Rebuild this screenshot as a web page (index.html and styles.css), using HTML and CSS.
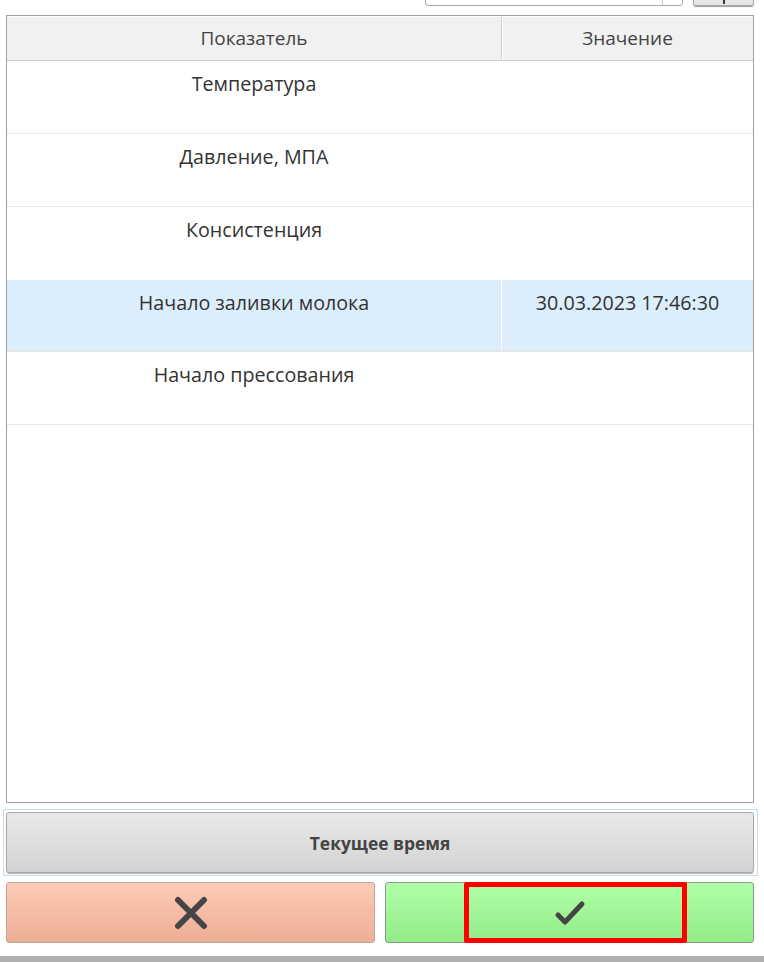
FILE: index.html
```html
<!DOCTYPE html>
<html lang="ru">
<head>
<meta charset="utf-8">
<link rel="stylesheet" href="styles.css">
</head>
<body>
<div class="page">
  <div class="toolbar">
    <div class="combo"><span class="combo-field"></span><span class="combo-arrow"></span></div>
    <div class="tool-btn"><span class="tool-glyph"></span></div>
  </div>
  <div class="grid">
    <div class="grid-head">
      <div class="cell c1">Показатель</div>
      <div class="cell c2">Значение</div>
    </div>
    <div class="grid-row"><div class="cell c1">Температура</div><div class="cell c2"></div></div>
    <div class="grid-row"><div class="cell c1">Давление, МПА</div><div class="cell c2"></div></div>
    <div class="grid-row"><div class="cell c1">Консистенция</div><div class="cell c2"></div></div>
    <div class="grid-row selected"><div class="cell c1">Начало заливки молока</div><div class="cell c2">30.03.2023 17:46:30</div></div>
    <div class="grid-row"><div class="cell c1">Начало прессования</div><div class="cell c2"></div></div>
  </div>
  <div class="now-wrap">
    <div class="now-btn">Текущее время</div>
  </div>
  <div class="actions">
    <div class="act cancel">
      <svg width="34" height="34" viewBox="0 0 34 34"><path d="M4 4 L30 30 M30 4 L4 30" stroke="#454545" stroke-width="6" stroke-linecap="round" fill="none"/></svg>
    </div>
    <div class="act ok">
      <span class="highlight"></span>
      <svg width="34" height="26" viewBox="0 0 34 26"><path d="M5 15 L12 22 L29 4" stroke="#454545" stroke-width="5" stroke-linecap="round" stroke-linejoin="round" fill="none"/></svg>
    </div>
  </div>
  <div class="bottom-bar"></div>
</div>
</body>
</html>
```

FILE: styles.css
```css
html, body {
  margin: 0;
  padding: 0;
  background: #ffffff;
}
body {
  font-family: "Open Sans", "Noto Sans", sans-serif;
  color: #333333;
  overflow: hidden;
}
.page {
  width: 764px;
  height: 962px;
  display: flex;
  flex-direction: column;
}
.toolbar {
  height: 15px;
  display: flex;
  justify-content: flex-end;
  align-items: flex-end;
  padding-right: 10px;
  gap: 10px;
  overflow: hidden;
}
.toolbar > * {
  margin-bottom: 9px;
}
.combo {
  width: 258px;
  height: 30px;
  border: 1px solid #a8a8a8;
  border-radius: 3px;
  display: flex;
  box-sizing: border-box;
  background: #fff;
}
.combo-field {
  flex: 1;
  border-right: 1px solid #c8c8c8;
}
.combo-arrow {
  width: 19px;
}
.tool-btn {
  width: 61px;
  height: 30px;
  box-sizing: border-box;
  border: 1px solid #a8a8a8;
  border-radius: 3px;
  background: linear-gradient(#f4f4f4, #e4e4e4);
  box-shadow: 0 1px 1px #999;
  display: flex;
  justify-content: center;
  align-items: flex-end;
}
.tool-glyph {
  width: 2px;
  height: 4px;
  background: #333;
  margin-bottom: 1px;
}
.grid {
  margin-left: 6px;
  width: 748px;
  height: 788px;
  box-sizing: border-box;
  border: 1px solid #a0a0a0;
  display: flex;
  flex-direction: column;
}
.grid-head {
  display: flex;
  height: 45px;
  box-sizing: border-box;
  background: #f1f1f1;
  border-top: 1px solid #ffffff;
  border-bottom: 1px solid #d2d2d2;
  font-size: 19px;
  color: #444;
}
.grid-head .cell {
  line-height: 43px;
}
.cell {
  text-align: center;
  box-sizing: border-box;
}
.c1 {
  width: 495px;
  border-right: 1px solid #d8d8d8;
}
.grid-head .c1 {
  border-right: 1px solid #cfcfcf;
  box-shadow: 1px 0 0 #fff;
}
.c2 {
  flex: 1;
}
.grid-row {
  display: flex;
  height: 73px;
  box-sizing: border-box;
  border-bottom: 1px solid #e6e6e6;
  font-size: 19.7px;
  color: #333;
}
.grid-row .cell {
  padding-top: 9px;
  line-height: 27px;
  border-right-color: transparent;
}
.grid-row.selected {
  background: #dcedfb;
  border-top: 1px solid #ffffff;
  border-bottom: 2px solid #e6e6e6;
  margin-top: -1px;
  height: 73px;
}
.grid-row.selected .c1 {
  border-right: 1px solid #ffffff;
}
.now-wrap {
  margin: 6px 0 0 3px;
  width: 755px;
  height: 67px;
  box-sizing: border-box;
  border: 1px solid #c6dcf0;
  padding: 2px;
}
.now-btn {
  height: 61px;
  width: 748px;
  box-sizing: border-box;
  border: 1px solid #a9a9a9;
  border-radius: 3px;
  background: linear-gradient(#e9e9e9, #d3d3d3);
  box-shadow: 0 1px 1px #b0b0b0;
  display: flex;
  justify-content: center;
  align-items: center;
  font-weight: 700;
  font-size: 17.4px;
  color: #444;
}
.actions {
  margin: 6px 0 0 6px;
  width: 748px;
  height: 61px;
  display: flex;
  gap: 10px;
}
.act {
  flex: 1;
  box-sizing: border-box;
  border: 1px solid #9a9a9a;
  border-radius: 3px;
  display: flex;
  justify-content: center;
  align-items: center;
  position: relative;
}
.cancel {
  background: linear-gradient(#fdcbb5, #eeae95);
  border-color: #b8a8a0;
}
.cancel svg {
  margin-top: 1px;
  margin-left: 1px;
}
.ok {
  background: linear-gradient(#b0ffa8, #93ec88);
  border-color: #8a9a8a;
}
.ok svg {
  margin-top: 0;
}
.highlight {
  position: absolute;
  left: 78px;
  top: -1px;
  width: 223px;
  height: 61px;
  box-sizing: border-box;
  border: 5px solid #ff0000;
  border-radius: 2px;
}
.bottom-bar {
  margin-top: 13px;
  flex: 1;
  background: #b0b0b0;
}
```
